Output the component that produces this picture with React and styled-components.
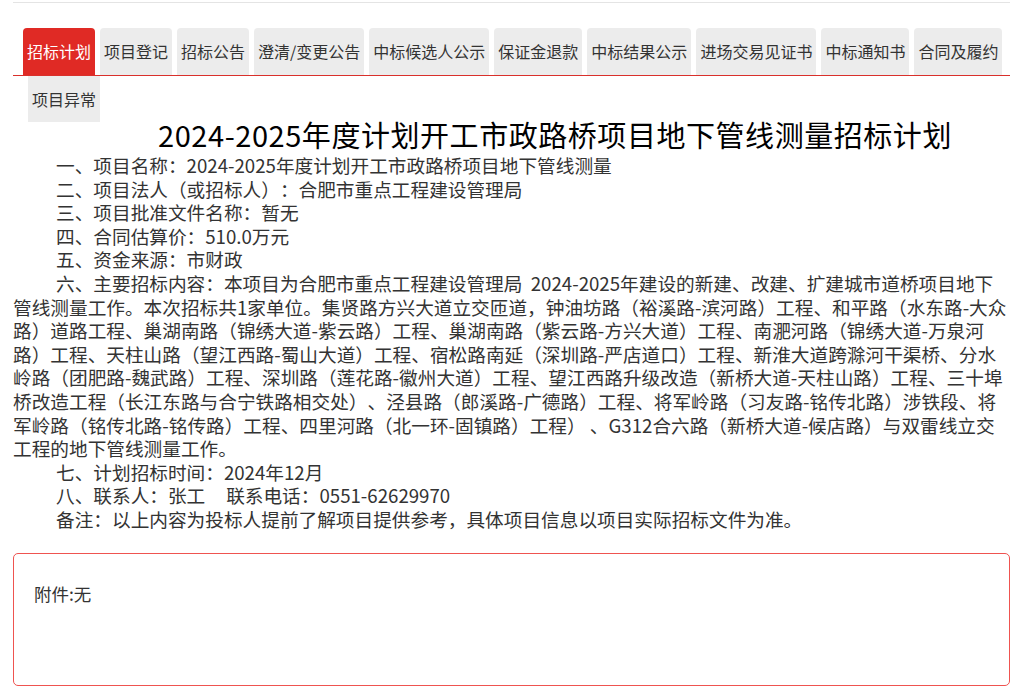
import React from "react";
import styled, { createGlobalStyle } from "styled-components";

const GlobalStyle = createGlobalStyle`
  html, body {
    margin: 0;
    padding: 0;
    background: #ffffff;
  }
  body {
    font-family: "Noto Sans CJK SC", "Microsoft YaHei", sans-serif;
    color: #333333;
    text-spacing-trim: space-all;
  }
`;

const Page = styled.div`
  padding: 2px 9px 0 13px;
`;

const TopRule = styled.div`
  border-top: 1px solid #e4e4e4;
`;

const TabBar = styled.nav`
  position: relative;
  margin-top: 25px;
  padding-left: 10px;
  display: flex;
  flex-wrap: wrap;
  row-gap: 1px;

  &::before {
    content: "";
    position: absolute;
    left: 0;
    right: 0;
    top: 47px;
    height: 1px;
    background: #d9302b;
  }
`;

const Tab = styled.a`
  display: block;
  height: ${(p) => (p.$flat ? "46px" : "47px")};
  line-height: ${(p) => (p.$flat ? "46px" : "47px")};
  padding: 0 4px;
  margin-left: ${(p) => (p.$first ? "0" : "5px")};
  font-size: 16px;
  white-space: nowrap;
  text-decoration: none;
  cursor: pointer;
  border-radius: ${(p) => (p.$flat ? "0" : "4px 4px 0 0")};
  background: ${(p) => (p.$active ? "#e02a25" : "#ececec")};
  color: ${(p) => (p.$active ? "#ffffff" : "#333333")};
`;

const Article = styled.article`
  color: #333333;
`;

const Title = styled.h1`
  margin: 0 0 6px;
  font-size: 29px;
  font-weight: normal;
  line-height: 25px;
  letter-spacing: 0.55px;
  color: #000000;
  text-align: center;
  text-indent: 87px;
  white-space: nowrap;
`;

const Para = styled.p`
  margin: 0;
  font-size: 18.67px;
  line-height: 23.6px;
  text-indent: 43px;
  text-spacing-trim: space-all;
`;

const Attachment = styled.div`
  box-sizing: border-box;
  height: 133px;
  margin-top: 22px;
  padding: 28px 20px;
  border: 1px solid #ef5350;
  border-radius: 5px;
  font-size: 17.5px;
  line-height: 24px;
  color: #333333;
`;

const tabs = [
  "招标计划",
  "项目登记",
  "招标公告",
  "澄清/变更公告",
  "中标候选人公示",
  "保证金退款",
  "中标结果公示",
  "进场交易见证书",
  "中标通知书",
  "合同及履约",
  "项目异常",
];

const paragraphs = [
  "一、项目名称：2024-2025年度计划开工市政路桥项目地下管线测量",
  "二、项目法人（或招标人）：合肥市重点工程建设管理局",
  "三、项目批准文件名称：暂无",
  "四、合同估算价：510.0万元",
  "五、资金来源：市财政",
  "六、主要招标内容：本项目为合肥市重点工程建设管理局\u00a0 2024-2025年建设的新建、改建、扩建城市道桥项目地下管线测量工作。本次招标共1家单位。集贤路方兴大道立交匝道，钟油坊路（裕溪路-滨河路）工程、和平路（水东路-大众路）道路工程、巢湖南路（锦绣大道-紫云路）工程、巢湖南路（紫云路-方兴大道）工程、南淝河路（锦绣大道-万泉河路）工程、天柱山路（望江西路-蜀山大道）工程、宿松路南延（深圳路-严店道口）工程、新淮大道跨滁河干渠桥、分水岭路（团肥路-魏武路）工程、深圳路（莲花路-徽州大道）工程、望江西路升级改造（新桥大道-天柱山路）工程、三十埠桥改造工程（长江东路与合宁铁路相交处）、泾县路（郎溪路-广德路）工程、将军岭路（习友路-铭传北路）涉铁段、将军岭路（铭传北路-铭传路）工程、四里河路（北一环-固镇路）工程） 、G312合六路（新桥大道-候店路）与双雷线立交工程的地下管线测量工作。",
  "七、计划招标时间：2024年12月",
  "八、联系人：张工\u00a0\u00a0\u00a0\u00a0\u00a0联系电话：0551-62629970",
  "备注：以上内容为投标人提前了解项目提供参考，具体项目信息以项目实际招标文件为准。",
];

export default function App() {
  return (
    <Page>
      <GlobalStyle />
      <TopRule />
      <TabBar>
        {tabs.map((t, i) => (
          <Tab
            key={t}
            $first={i === 0}
            $active={i === 0}
            $flat={i === tabs.length - 1}
          >
            {t}
          </Tab>
        ))}
      </TabBar>
      <Article>
        <Title>2024-2025年度计划开工市政路桥项目地下管线测量招标计划</Title>
        {paragraphs.map((p, i) => (
          <Para key={i}>{p}</Para>
        ))}
        <Attachment>附件:无</Attachment>
      </Article>
    </Page>
  );
}
